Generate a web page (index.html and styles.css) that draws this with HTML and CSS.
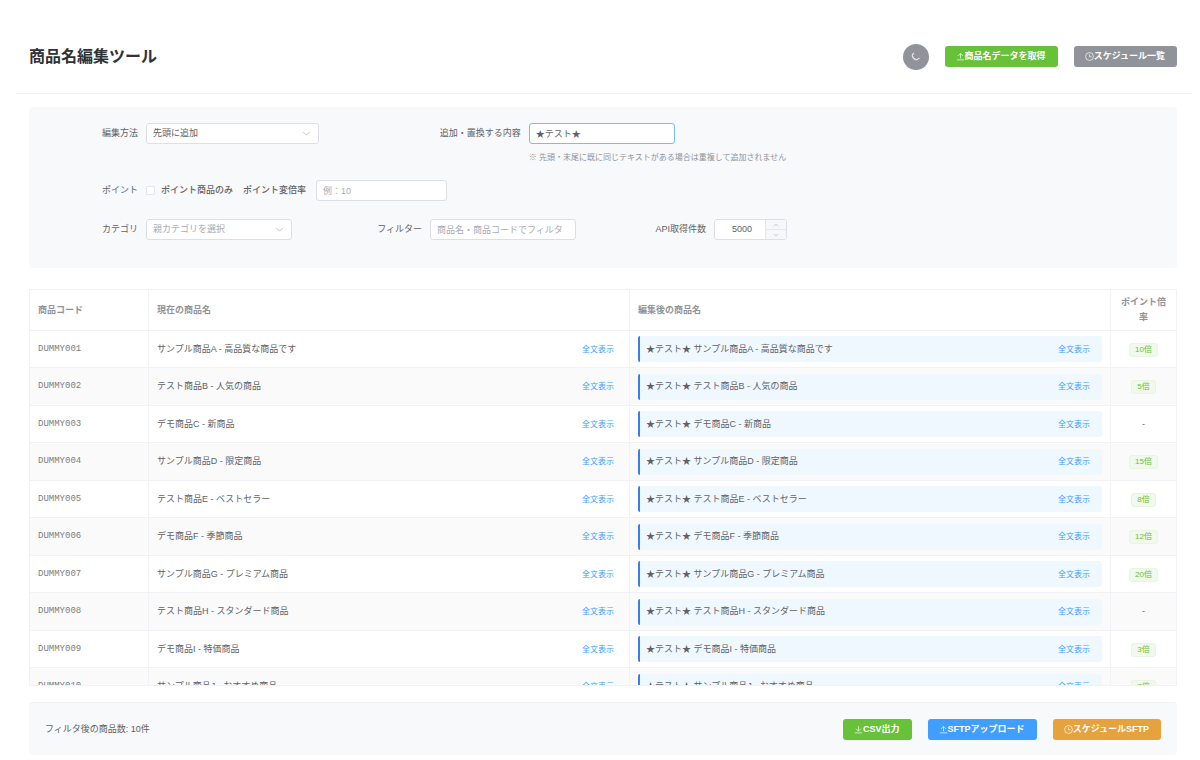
FILE: index.html
```html
<!DOCTYPE html>
<html lang="ja">
<head>
    <meta charset="UTF-8">
    <meta name="viewport" content="width=device-width, initial-scale=1.0">
    <title>商品名編集ツール</title>
    <link rel="stylesheet" href="styles.css">
</head>
<body>
    <svg class="sprite" aria-hidden="true">
        <symbol id="icon-upload" viewBox="0 0 16 16"><path d="M1.5 14h13M8 11.5V2.5M3.5 7L8 2.5L12.5 7"/></symbol>
        <symbol id="icon-download" viewBox="0 0 16 16"><path d="M1.5 14h13M8 2v9M3.5 6.5L8 11L12.5 6.5"/></symbol>
        <symbol id="icon-clock" viewBox="0 0 16 16"><circle cx="8" cy="8" r="7"/><path d="M8 4v4.5h4"/></symbol>
        <symbol id="icon-moon" viewBox="0 0 16 16"><path d="M4.8 1.5A7 7 0 1 0 15 10.8A6.6 6.6 0 0 1 4.8 1.5z"/></symbol>
        <symbol id="icon-down" viewBox="0 0 16 16"><path d="M2 5l6 6l6-6"/></symbol>
        <symbol id="icon-up" viewBox="0 0 16 16"><path d="M2 11l6-6l6 6"/></symbol>
    </svg>

    <header class="header">
        <h1>商品名編集ツール</h1>
        <div class="actions">
            <button type="button" class="btn-round" aria-label="ダークモード"><svg class="icon"><use href="#icon-moon"/></svg></button>
            <button type="button" class="btn btn-success"><svg class="icon"><use href="#icon-upload"/></svg>商品名データを取得</button>
            <button type="button" class="btn btn-info"><svg class="icon"><use href="#icon-clock"/></svg>スケジュール一覧</button>
        </div>
    </header>

    <main class="main">
        <form class="panel">
            <div class="row row-edit">
                <div class="field">
                    <label class="label" for="mode">編集方法</label>
                    <div class="select select-wide">
                        <select id="mode">
                            <option>先頭に追加</option>
                        </select>
                        <svg class="icon"><use href="#icon-down"/></svg>
                    </div>
                </div>
                <div class="field">
                    <label class="label" for="content">追加・置換する内容</label>
                    <div class="control">
                        <input type="text" id="content" class="input is-focus" value="★テスト★">
                        <p class="hint">※ 先頭・末尾に既に同じテキストがある場合は重複して追加されません</p>
                    </div>
                </div>
            </div>

            <div class="row">
                <div class="field">
                    <span class="label">ポイント</span>
                    <input type="checkbox" id="pointOnly" class="checkbox">
                    <label class="label-check" for="pointOnly">ポイント商品のみ</label>
                    <label class="label-rate" for="pointRate">ポイント変倍率</label>
                    <input type="text" id="pointRate" class="input input-small" placeholder="例：10">
                </div>
            </div>

            <div class="row row-filter">
                <div class="field">
                    <label class="label" for="category">カテゴリ</label>
                    <div class="select">
                        <select id="category" class="is-empty">
                            <option>親カテゴリを選択</option>
                        </select>
                        <svg class="icon"><use href="#icon-down"/></svg>
                    </div>
                </div>
                <div class="field">
                    <label class="label" for="filter">フィルター</label>
                    <input type="text" id="filter" class="input" placeholder="商品名・商品コードでフィルタ">
                </div>
                <div class="field">
                    <label class="label" for="limit">API取得件数</label>
                    <div class="number">
                        <input type="number" id="limit" value="5000">
                        <div class="number-buttons">
                            <button type="button" aria-label="増やす"><svg class="icon"><use href="#icon-up"/></svg></button>
                            <button type="button" aria-label="減らす"><svg class="icon"><use href="#icon-down"/></svg></button>
                        </div>
                    </div>
                </div>
            </div>
        </form>

        <div class="table-wrap">
            <table>
                <colgroup>
                    <col class="col-code">
                    <col>
                    <col>
                    <col class="col-point">
                </colgroup>
                <thead>
                    <tr>
                        <th>商品コード</th>
                        <th>現在の商品名</th>
                        <th>編集後の商品名</th>
                        <th class="point">ポイント倍率</th>
                    </tr>
                </thead>
                <tbody>
                    <tr>
                        <td class="code">DUMMY001</td>
                        <td><div class="name"><span>サンプル商品A - 高品質な商品です</span><button type="button" class="more">全文表示</button></div></td>
                        <td><div class="name preview"><span>★テスト★ サンプル商品A - 高品質な商品です</span><button type="button" class="more">全文表示</button></div></td>
                        <td class="point"><span class="tag">10倍</span></td>
                    </tr>
                    <tr>
                        <td class="code">DUMMY002</td>
                        <td><div class="name"><span>テスト商品B - 人気の商品</span><button type="button" class="more">全文表示</button></div></td>
                        <td><div class="name preview"><span>★テスト★ テスト商品B - 人気の商品</span><button type="button" class="more">全文表示</button></div></td>
                        <td class="point"><span class="tag">5倍</span></td>
                    </tr>
                    <tr>
                        <td class="code">DUMMY003</td>
                        <td><div class="name"><span>デモ商品C - 新商品</span><button type="button" class="more">全文表示</button></div></td>
                        <td><div class="name preview"><span>★テスト★ デモ商品C - 新商品</span><button type="button" class="more">全文表示</button></div></td>
                        <td class="point">-</td>
                    </tr>
                    <tr>
                        <td class="code">DUMMY004</td>
                        <td><div class="name"><span>サンプル商品D - 限定商品</span><button type="button" class="more">全文表示</button></div></td>
                        <td><div class="name preview"><span>★テスト★ サンプル商品D - 限定商品</span><button type="button" class="more">全文表示</button></div></td>
                        <td class="point"><span class="tag">15倍</span></td>
                    </tr>
                    <tr>
                        <td class="code">DUMMY005</td>
                        <td><div class="name"><span>テスト商品E - ベストセラー</span><button type="button" class="more">全文表示</button></div></td>
                        <td><div class="name preview"><span>★テスト★ テスト商品E - ベストセラー</span><button type="button" class="more">全文表示</button></div></td>
                        <td class="point"><span class="tag">8倍</span></td>
                    </tr>
                    <tr>
                        <td class="code">DUMMY006</td>
                        <td><div class="name"><span>デモ商品F - 季節商品</span><button type="button" class="more">全文表示</button></div></td>
                        <td><div class="name preview"><span>★テスト★ デモ商品F - 季節商品</span><button type="button" class="more">全文表示</button></div></td>
                        <td class="point"><span class="tag">12倍</span></td>
                    </tr>
                    <tr>
                        <td class="code">DUMMY007</td>
                        <td><div class="name"><span>サンプル商品G - プレミアム商品</span><button type="button" class="more">全文表示</button></div></td>
                        <td><div class="name preview"><span>★テスト★ サンプル商品G - プレミアム商品</span><button type="button" class="more">全文表示</button></div></td>
                        <td class="point"><span class="tag">20倍</span></td>
                    </tr>
                    <tr>
                        <td class="code">DUMMY008</td>
                        <td><div class="name"><span>テスト商品H - スタンダード商品</span><button type="button" class="more">全文表示</button></div></td>
                        <td><div class="name preview"><span>★テスト★ テスト商品H - スタンダード商品</span><button type="button" class="more">全文表示</button></div></td>
                        <td class="point">-</td>
                    </tr>
                    <tr>
                        <td class="code">DUMMY009</td>
                        <td><div class="name"><span>デモ商品I - 特価商品</span><button type="button" class="more">全文表示</button></div></td>
                        <td><div class="name preview"><span>★テスト★ デモ商品I - 特価商品</span><button type="button" class="more">全文表示</button></div></td>
                        <td class="point"><span class="tag">3倍</span></td>
                    </tr>
                    <tr>
                        <td class="code">DUMMY010</td>
                        <td><div class="name"><span>サンプル商品J - おすすめ商品</span><button type="button" class="more">全文表示</button></div></td>
                        <td><div class="name preview"><span>★テスト★ サンプル商品J - おすすめ商品</span><button type="button" class="more">全文表示</button></div></td>
                        <td class="point"><span class="tag">7倍</span></td>
                    </tr>
                </tbody>
            </table>
        </div>

        <footer class="footer">
            <span>フィルタ後の商品数: 10件</span>
            <div class="actions">
                <button type="button" class="btn btn-success"><svg class="icon"><use href="#icon-download"/></svg>CSV出力</button>
                <button type="button" class="btn btn-primary"><svg class="icon"><use href="#icon-upload"/></svg>SFTPアップロード</button>
                <button type="button" class="btn btn-warning"><svg class="icon"><use href="#icon-clock"/></svg>スケジュールSFTP</button>
            </div>
        </footer>
    </main>
</body>
</html>
```

FILE: styles.css
```css
* {
    box-sizing: border-box;
}
body {
    display: flex;
    flex-direction: column;
    height: 100vh;
    margin: 0;
    padding: 20px 8px 5px 16px;
    background: #fff;
    color: #606266;
    font-family: "Liberation Sans", "Noto Sans CJK JP", sans-serif;
    font-size: 9px;
    line-height: 15px;
}
button, input, select {
    margin: 0;
    font: inherit;
    color: inherit;
}
button {
    padding: 0;
    border: none;
    background: none;
    cursor: pointer;
}
.sprite {
    position: absolute;
    width: 0;
    height: 0;
}
.icon {
    width: 9px;
    height: 9px;
    fill: none;
    stroke: currentColor;
    stroke-width: 1.2;
}

/* header */
.header {
    display: flex;
    align-items: center;
    justify-content: space-between;
    height: 74px;
    padding: 0 15px 0 13px;
    border-bottom: 1px solid #f0f2f5;
}
h1 {
    margin: 0;
    color: #303133;
    font-size: 16px;
    line-height: 24px;
}
.actions {
    display: flex;
    align-items: center;
    gap: 16px;
}
.btn {
    display: flex;
    align-items: center;
    height: 21px;
    padding: 0 12px 0 11px;
    border-radius: 3px;
    color: #fff;
    font-weight: bold;
}
.btn-success {
    background: #67c23a;
}
.btn-info {
    background: #909399;
}
.btn-primary {
    background: #409eff;
}
.btn-warning {
    background: #e6a23c;
}
.btn-round {
    display: flex;
    align-items: center;
    justify-content: center;
    width: 26px;
    height: 26px;
    border-radius: 50%;
    background: #909399;
    color: #fff;
}

.main {
    display: flex;
    flex: 1;
    flex-direction: column;
    min-height: 0;
    padding: 13px 15px 0 13px;
}

/* form */
.panel {
    padding: 16px 16px 28px;
    border-radius: 4px;
    background: #f8f9fb;
}
.row {
    display: flex;
    margin-bottom: 18px;
}
.row-edit {
    display: grid;
    grid-template-columns: 1fr 2fr;
    gap: 16px;
    margin-bottom: 15px;
}
.row-filter {
    display: grid;
    grid-template-columns: repeat(4, 1fr);
    gap: 20px;
    margin-bottom: 0;
}
.field {
    display: flex;
    align-items: flex-start;
}
.label {
    flex: none;
    width: 101px;
    padding-right: 8px;
    line-height: 21px;
    text-align: right;
}
.input, .select select {
    width: 146px;
    height: 21px;
    padding: 0 6px;
    border: 1px solid #dcdfe6;
    border-radius: 3px;
    background: #fff;
    outline: none;
}
.input.is-focus {
    border-color: #79bbff;
}
.input.input-small {
    width: 131px;
}
.input::placeholder, .select .is-empty {
    color: #a8abb2;
    opacity: 1;
}
.select {
    position: relative;
}
.select select {
    appearance: none;
}
.select.select-wide select {
    width: 173px;
}
.select .icon {
    position: absolute;
    top: 6px;
    right: 8px;
    color: #a8abb2;
    pointer-events: none;
}
.hint {
    margin: 6px 0 0;
    color: #909399;
    font-size: 8px;
    line-height: 15px;
}
.checkbox {
    appearance: none;
    width: 9px;
    height: 9px;
    margin: 6px 6px 0 0;
    border: 1px solid #e4e7ed;
    border-radius: 1px;
    background: #fff;
}
.label-check, .label-rate {
    padding-right: 10px;
    font-weight: 500;
    line-height: 21px;
}
.number {
    display: flex;
    width: 73px;
    height: 21px;
    border: 1px solid #dcdfe6;
    border-radius: 3px;
    background: #fff;
}
.number input {
    width: 50px;
    padding: 0 0 0 4px;
    border: none;
    background: none;
    text-align: center;
    appearance: textfield;
}
.number input::-webkit-inner-spin-button {
    appearance: none;
}
.number-buttons {
    display: flex;
    flex: 1;
    flex-direction: column;
    border-left: 1px solid #e4e7ed;
    background: #f5f7fa;
    color: #909399;
}
.number-buttons button {
    display: flex;
    flex: 1;
    align-items: center;
    justify-content: center;
}
.number-buttons button + button {
    border-top: 1px solid #e4e7ed;
}
.number-buttons .icon {
    width: 6px;
    height: 6px;
}

/* table */
.table-wrap {
    flex: 1;
    min-height: 0;
    margin: 21px 0 16px;
    overflow: auto;
    scrollbar-width: none;
    border: 1px solid #f0f2f5;
    border-width: 1px 0 1px 1px;
}
table {
    width: 100%;
    table-layout: fixed;
    border-collapse: separate;
    border-spacing: 0;
}
.col-code {
    width: 119px;
}
.col-point {
    width: 66px;
}
th, td {
    padding: 0 8px;
    border-right: 1px solid #f0f2f5;
    border-bottom: 1px solid #f0f2f5;
    text-align: left;
}
th {
    height: 41px;
    color: #909399;
    font-weight: bold;
}
td {
    height: 37px;
}
tr:nth-child(even) td {
    height: 38px;
    background: #fafafa;
}
.code {
    color: #7a7d82;
    font-family: "Liberation Mono", monospace;
}
th.point, td.point {
    text-align: center;
}
.name {
    display: flex;
    align-items: center;
    justify-content: space-between;
    padding-right: 7px;
}
.preview {
    height: 26px;
    padding: 0 12px 0 6px;
    border-left: 2px solid #3b7ded;
    border-radius: 2px;
    background: #f0f8ff;
}
.more {
    color: #409eff;
    font-size: 8px;
}
.tag {
    display: inline-block;
    padding: 0 5px;
    border: 1px solid #e8f5e1;
    border-radius: 3px;
    background: #f0f9eb;
    color: #67c23a;
    font-size: 8px;
    line-height: 12px;
}

/* footer */
.footer {
    display: flex;
    align-items: center;
    justify-content: space-between;
    height: 53px;
    padding: 0 16px;
    border-top: 1px solid #f0f2f5;
    border-radius: 4px;
    background: #f8f9fb;
}
```
